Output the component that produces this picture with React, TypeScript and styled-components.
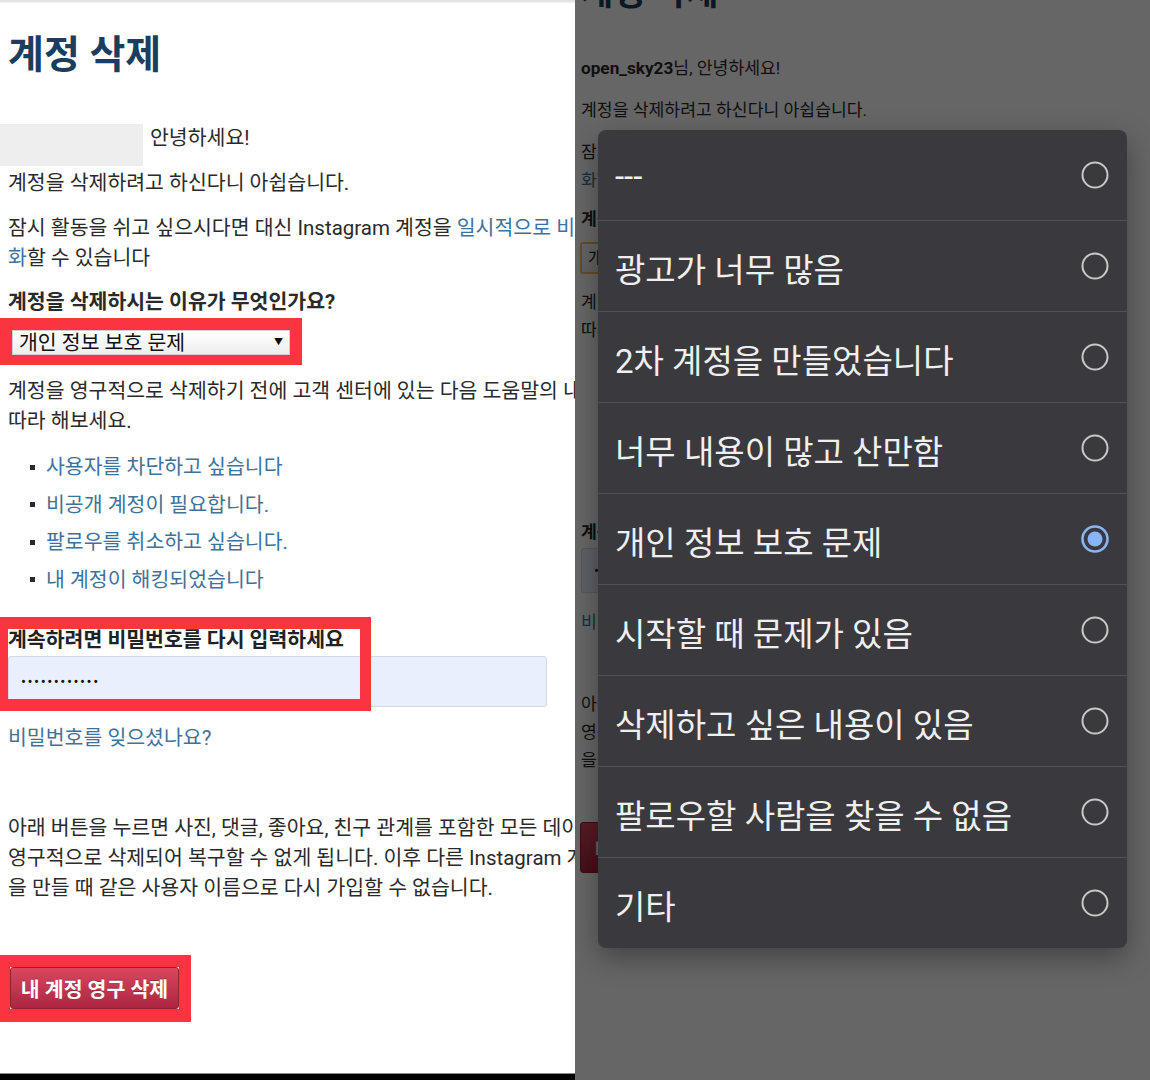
import * as React from "react"
import styled, { createGlobalStyle, ThemeProvider } from "styled-components"

type Gaps = {
  greet: number
  sad: number
  brk: number
  question: number
  select: number
  help: number
  list: number
  pass: number
  forgot: number
  warn: number
  button: number
}

type Look = {
  inset: number
  font: number
  line: number
  titleFont: number
  titleLine: number
  titleTop: number
  itemGap: number
  listIndent: number
  selectW: number
  selectH: number
  inputW: number
  inputH: number
  labelGap: number
  buttonW: number
  buttonH: number
  buttonFont: number
  gaps: Gaps
}

declare module "styled-components" {
  export interface DefaultTheme extends Look {}
}

const full: Look = {
  inset: 8,
  font: 20.5,
  line: 30,
  titleFont: 39,
  titleLine: 44,
  titleTop: 30,
  itemGap: 7.5,
  listIndent: 38,
  selectW: 278,
  selectH: 25,
  inputW: 539,
  inputH: 51,
  labelGap: 1,
  buttonW: 169,
  buttonH: 42,
  buttonFont: 20.5,
  gaps: {
    greet: 46,
    sad: 15,
    brk: 15,
    question: 14,
    select: 1,
    help: 11,
    list: 16,
    pass: 30.5,
    forgot: 16,
    warn: 60,
    button: 52
  }
}

const dim: Look = {
  inset: 6,
  font: 17.2,
  line: 28,
  titleFont: 35,
  titleLine: 40,
  titleTop: -26,
  itemGap: 7,
  listIndent: 35,
  selectW: 300,
  selectH: 32,
  inputW: 525,
  inputH: 45,
  labelGap: 2,
  buttonW: 180,
  buttonH: 51,
  buttonFont: 21,
  gaps: {
    greet: 40,
    sad: 14,
    brk: 14,
    question: 11,
    select: 9,
    help: 14,
    list: 14,
    pass: 27,
    forgot: 15,
    warn: 54,
    button: 48
  }
}

const GlobalStyle = createGlobalStyle`
  * { box-sizing: border-box; }
  html, body { margin: 0; padding: 0; background: #fff; }
  body { font-family: Roboto, "Noto Sans CJK KR", sans-serif; }
`

const Screen = styled.main`
  display: flex;
  width: 1150px;
  height: 1080px;
  overflow: hidden;
`

const Pane = styled.section`
  position: relative;
  flex: 0 0 575px;
  height: 100%;
  display: flex;
  flex-direction: column;
  overflow: hidden;
  background: #fff;
`

const TopRule = styled.div`
  flex: none;
  height: 3px;
  background: linear-gradient(#dedede, #f1f1f1);
`

const BottomBar = styled.div`
  flex: none;
  height: 7px;
  margin-top: auto;
  background: #000;
  border-top: 1px solid #8a8a8a;
`

const Page = styled.div`
  display: flex;
  flex-direction: column;
  align-items: flex-start;
  padding-left: ${p => p.theme.inset}px;
  color: #2a2a2a;
  font-size: ${p => p.theme.font}px;
  line-height: ${p => p.theme.line}px;
  white-space: nowrap;
`

const Title = styled.h1`
  margin: ${p => p.theme.titleTop}px 0 0;
  font-size: ${p => p.theme.titleFont}px;
  line-height: ${p => p.theme.titleLine}px;
  font-weight: 700;
  color: #1c3d5e;
`

const Para = styled.p<{ $gap: keyof Gaps; $strong?: boolean }>`
  margin: ${p => p.theme.gaps[p.$gap]}px 0 0;
  font-weight: ${p => (p.$strong ? 700 : 400)};
`

const Greeting = styled.p`
  display: flex;
  height: ${p => p.theme.line}px;
  margin: ${p => p.theme.gaps.greet}px 0 0;
`

const Redacted = styled.span`
  flex: none;
  width: 143px;
  height: 42px;
  margin: 1px 7px 0 -8px;
  background: #eeeeee;
`

const Link = styled.a`
  color: #3f729b;
  text-decoration: none;
`

const Marked = styled.div<{ $on: boolean; $edges: string; $gap: keyof Gaps }>`
  margin: ${p => p.theme.gaps[p.$gap]}px 0 0
    ${p => (p.$on ? -p.theme.inset : -1)}px;
  border: solid #fb3441;
  border-width: ${p => (p.$on ? p.$edges : "0")};
`

const SelectBox = styled.div<{ $focused: boolean }>`
  display: flex;
  align-items: center;
  justify-content: space-between;
  width: ${p => p.theme.selectW}px;
  height: ${p => p.theme.selectH}px;
  padding: 0 6px;
  color: #111;
  background: linear-gradient(#ffffff, #eeeeee);
  border: ${p => (p.$focused ? "2px solid #f4c35a" : "1px solid #cfcfcf")};
  border-radius: ${p => (p.$focused ? 3 : 0)}px;
`

const Caret = styled.span`
  font-size: 9px;
  line-height: 1;
`

const HelpList = styled.ul`
  display: flex;
  flex-direction: column;
  gap: ${p => p.theme.itemGap}px;
  margin: ${p => p.theme.gaps.list}px 0 0;
  padding: 0 0 0 ${p => p.theme.listIndent}px;
  list-style: none;
`

const HelpItem = styled.li`
  display: flex;
  align-items: center;

  &::before {
    content: "";
    flex: none;
    width: 5px;
    height: 5px;
    margin: 0 11px 0 -16px;
    background: #2a2a2a;
  }
`

const PasswordGroup = styled.div`
  position: relative;
  margin-top: ${p => p.theme.gaps.pass}px;
`

const FieldLabel = styled.label`
  display: block;
  font-weight: 700;
  color: #222;
`

const PasswordField = styled.div`
  display: flex;
  align-items: center;
  width: ${p => p.theme.inputW}px;
  height: ${p => p.theme.inputH}px;
  margin-top: ${p => p.theme.labelGap}px;
  padding-left: 12px;
  background: #e8f0fe;
  border: 1px solid #d3d9e3;
  border-radius: 3px;
  color: #111;
  font-size: 15px;
  letter-spacing: 1.5px;
`

const PasswordMark = styled.div`
  position: absolute;
  top: -8px;
  left: -8px;
  width: 371px;
  height: 94px;
  border: solid #fb3441;
  border-width: 12px 11px 12px 8px;
  pointer-events: none;
`

const DangerButton = styled.button`
  display: block;
  width: ${p => p.theme.buttonW}px;
  height: ${p => p.theme.buttonH}px;
  padding: 0;
  border: 1px solid #9e1d35;
  border-radius: 3px;
  background: linear-gradient(#d9475f, #ac2540);
  color: #fff;
  font-family: Roboto, "Noto Sans CJK KR", sans-serif;
  font-size: ${p => p.theme.buttonFont}px;
  font-weight: 700;
  text-shadow: 0 -1px 0 rgba(0, 0, 0, 0.25);
`

const Backdrop = styled.div`
  position: absolute;
  inset: 0;
  background: rgba(0, 0, 0, 0.6);
`

const Dialog = styled.div`
  position: absolute;
  top: 130px;
  left: 23px;
  width: 529px;
  background: #3a393e;
  border-radius: 8px;
  overflow: hidden;
  box-shadow: 0 10px 28px rgba(0, 0, 0, 0.35);
`

const OptionRow = styled.div`
  display: flex;
  align-items: center;
  justify-content: space-between;
  height: 91px;
  padding: 0 18px 0 17px;
  border-top: 1px solid #505055;
  color: #efefef;
  font-family: Roboto, "Noto Sans CJK KR", sans-serif;
  font-size: 33px;

  &:first-child {
    height: 90px;
    border-top: 0;
  }
`

const OptionLabel = styled.span`
  padding-top: 3px;
`

function Radio({ checked }: { checked: boolean }) {
  return (
    <svg width="28" height="28" viewBox="0 0 28 28">
      <circle
        cx="14"
        cy="14"
        r="12.5"
        fill="none"
        stroke={checked ? "#8ab4f8" : "#c8c8c8"}
        strokeWidth={checked ? 2.6 : 2}
      />
      {checked && <circle cx="14" cy="14" r="7.5" fill="#8ab4f8" />}
    </svg>
  )
}

const reasons = [
  "---",
  "광고가 너무 많음",
  "2차 계정을 만들었습니다",
  "너무 내용이 많고 산만함",
  "개인 정보 보호 문제",
  "시작할 때 문제가 있음",
  "삭제하고 싶은 내용이 있음",
  "팔로우할 사람을 찾을 수 없음",
  "기타"
]

const helpLinks = [
  "사용자를 차단하고 싶습니다",
  "비공개 계정이 필요합니다.",
  "팔로우를 취소하고 싶습니다.",
  "내 계정이 해킹되었습니다"
]

function DeletePage({ marked }: { marked: boolean }) {
  return (
    <Page>
      <Title>계정 삭제</Title>
      {marked ? (
        <Greeting>
          <Redacted />
          안녕하세요!
        </Greeting>
      ) : (
        <Greeting>
          <b>open_sky23</b>님, 안녕하세요!
        </Greeting>
      )}
      <Para $gap="sad">계정을 삭제하려고 하신다니 아쉽습니다.</Para>
      <Para $gap="brk">
        잠시 활동을 쉬고 싶으시다면 대신 Instagram 계정을{" "}
        <Link>일시적으로 비활성</Link>
        <br />
        <Link>화</Link>할 수 있습니다
      </Para>
      <Para $gap="question" $strong>
        계정을 삭제하시는 이유가 무엇인가요?
      </Para>
      <Marked $on={marked} $gap="select" $edges="12px 12px 10px 12px">
        <SelectBox $focused={!marked}>
          개인 정보 보호 문제
          <Caret>▼</Caret>
        </SelectBox>
      </Marked>
      <Para $gap="help">
        계정을 영구적으로 삭제하기 전에 고객 센터에 있는 다음 도움말의 내용을
        <br />
        따라 해보세요.
      </Para>
      <HelpList>
        {helpLinks.map(text => (
          <HelpItem key={text}>
            <Link>{text}</Link>
          </HelpItem>
        ))}
      </HelpList>
      <PasswordGroup>
        <FieldLabel>계속하려면 비밀번호를 다시 입력하세요</FieldLabel>
        <PasswordField>••••••••••••</PasswordField>
        {marked && <PasswordMark />}
      </PasswordGroup>
      <Para $gap="forgot">
        <Link>비밀번호를 잊으셨나요?</Link>
      </Para>
      <Para $gap="warn">
        아래 버튼을 누르면 사진, 댓글, 좋아요, 친구 관계를 포함한 모든 데이터가
        <br />
        영구적으로 삭제되어 복구할 수 없게 됩니다. 이후 다른 Instagram 계정
        <br />을 만들 때 같은 사용자 이름으로 다시 가입할 수 없습니다.
      </Para>
      <Marked $on={marked} $gap="button" $edges="12px 12px 13px 10px">
        <DangerButton>내 계정 영구 삭제</DangerButton>
      </Marked>
    </Page>
  )
}

export default function App() {
  return (
    <>
      <GlobalStyle />
      <Screen>
        <ThemeProvider theme={full}>
          <Pane>
            <TopRule />
            <DeletePage marked />
            <BottomBar />
          </Pane>
        </ThemeProvider>
        <ThemeProvider theme={dim}>
          <Pane>
            <DeletePage marked={false} />
            <Backdrop />
            <Dialog>
              {reasons.map(reason => (
                <OptionRow key={reason}>
                  <OptionLabel>{reason}</OptionLabel>
                  <Radio checked={reason === "개인 정보 보호 문제"} />
                </OptionRow>
              ))}
            </Dialog>
          </Pane>
        </ThemeProvider>
      </Screen>
    </>
  )
}
